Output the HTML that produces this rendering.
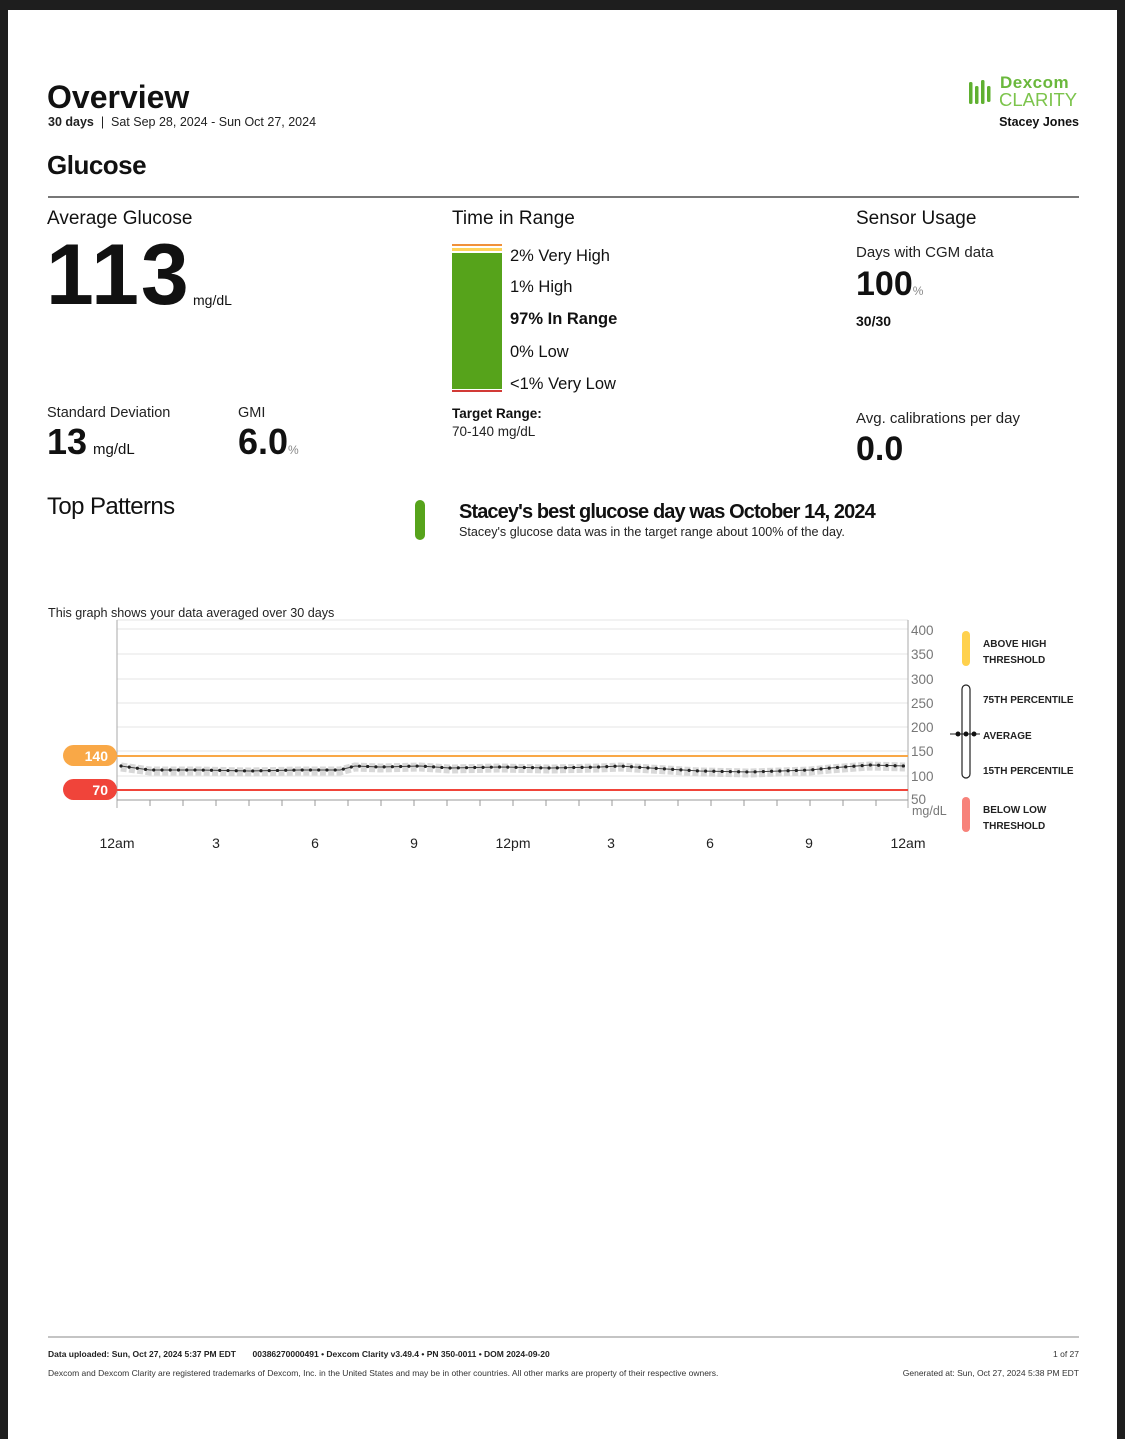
<!DOCTYPE html>
<html><head><meta charset="utf-8"><style>
*{margin:0;padding:0;box-sizing:border-box}
body{width:1125px;height:1439px;background:#1e1e1e;position:relative;overflow:hidden;font-family:"Liberation Sans",sans-serif;color:#111}
#pg{position:absolute;left:8px;top:10px;width:1109px;height:1429px;background:#fff}
.t{position:absolute;line-height:1;white-space:nowrap}
.b{font-weight:bold}
</style></head><body>
<div id="pg"></div>
<div class="t b" style="left:47px;top:81px;font-size:32px">Overview</div>
<div class="t" style="left:48px;top:116px;font-size:12.5px;color:#222"><b>30 days</b> &nbsp;| &nbsp;Sat Sep 28, 2024 - Sun Oct 27, 2024</div>
<div class="t b" style="left:47px;top:152px;font-size:26px;letter-spacing:-0.5px">Glucose</div>
<div style="position:absolute;left:48px;top:196px;width:1031px;height:1.5px;background:#777"></div>

<svg style="position:absolute;left:966px;top:78px" width="30" height="30"><g fill="#5fb030"><rect x="3" y="4" width="3.5" height="22" rx="1.5"/><rect x="9" y="8" width="3.5" height="18" rx="1.5"/><rect x="15" y="2" width="3.5" height="24" rx="1.5"/><rect x="21" y="8" width="3.5" height="16" rx="1.5"/></g></svg>
<div class="t b" style="left:1000px;top:74px;font-size:17px;color:#6ab83c;letter-spacing:0.5px">Dexcom</div>
<div class="t" style="left:999px;top:91px;font-size:18.5px;color:#7cc44c">CLARITY</div>
<div class="t b" style="right:46px;top:116px;font-size:12.5px">Stacey Jones</div>

<div class="t" style="left:47px;top:209px;font-size:19px">Average Glucose</div>
<div class="t b" style="left:46px;top:232px;font-size:86px;letter-spacing:2px">113</div>
<div class="t" style="left:193px;top:293px;font-size:14px">mg/dL</div>
<div class="t" style="left:47px;top:406px;font-size:14.5px;color:#222">Standard Deviation</div>
<div class="t b" style="left:47px;top:424px;font-size:36px">13</div>
<div class="t" style="left:93px;top:442px;font-size:15px">mg/dL</div>
<div class="t" style="left:238px;top:406px;font-size:14.5px;color:#222">GMI</div>
<div class="t b" style="left:238px;top:424px;font-size:36px">6.0<span style="font-size:12px;color:#888;font-weight:normal">%</span></div>

<div class="t" style="left:452px;top:209px;font-size:19px">Time in Range</div>
<div style="position:absolute;left:452px;top:244px;width:50px;height:2px;background:#f0913a"></div>
<div style="position:absolute;left:452px;top:248px;width:50px;height:3px;background:#ffd35a"></div>
<div style="position:absolute;left:452px;top:253px;width:50px;height:136px;background:#56a31b"></div>
<div style="position:absolute;left:452px;top:390px;width:50px;height:2px;background:#d23a36"></div>
<div class="t" style="left:510px;top:248px;font-size:16.5px">2% Very High</div>
<div class="t" style="left:510px;top:279px;font-size:16.5px">1% High</div>
<div class="t b" style="left:510px;top:311px;font-size:16.5px">97% In Range</div>
<div class="t" style="left:510px;top:344px;font-size:16.5px">0% Low</div>
<div class="t" style="left:510px;top:376px;font-size:16.5px">&lt;1% Very Low</div>
<div class="t b" style="left:452px;top:407px;font-size:13.5px">Target Range:</div>
<div class="t" style="left:452px;top:425px;font-size:13.5px;color:#222">70-140 mg/dL</div>

<div class="t" style="left:856px;top:209px;font-size:19px">Sensor Usage</div>
<div class="t" style="left:856px;top:245px;font-size:15px;color:#222">Days with CGM data</div>
<div class="t b" style="left:856px;top:267px;font-size:34px">100<span style="font-size:12px;color:#888;font-weight:normal">%</span></div>
<div class="t b" style="left:856px;top:314px;font-size:14px">30/30</div>
<div class="t" style="left:856px;top:411px;font-size:15px;color:#222">Avg. calibrations per day</div>
<div class="t b" style="left:856px;top:432px;font-size:34px">0.0</div>

<div class="t" style="left:47px;top:495px;font-size:24px;letter-spacing:-0.6px">Top Patterns</div>
<div style="position:absolute;left:415px;top:500px;width:10px;height:40px;border-radius:5px;background:#56a31b"></div>
<div class="t b" style="left:459px;top:502px;font-size:20px;letter-spacing:-0.9px">Stacey's best glucose day was October 14, 2024</div>
<div class="t" style="left:459px;top:526px;font-size:12.6px;color:#222">Stacey's glucose data was in the target range about 100% of the day.</div>

<div class="t" style="left:48px;top:607px;font-size:12.6px;color:#222">This graph shows your data averaged over 30 days</div>

<svg style="position:absolute;left:0;top:0" width="1125" height="900">
<g stroke="#e6e6e6" stroke-width="1">
<line x1="117" y1="629" x2="908" y2="629"/><line x1="117" y1="654" x2="908" y2="654"/><line x1="117" y1="679" x2="908" y2="679"/><line x1="117" y1="703" x2="908" y2="703"/><line x1="117" y1="727" x2="908" y2="727"/><line x1="117" y1="751" x2="908" y2="751"/><line x1="117" y1="776" x2="908" y2="776"/><line x1="117" y1="800" x2="908" y2="800"/>
<line x1="117" y1="620" x2="908" y2="620"/>
</g>
<line x1="117" y1="620" x2="117" y2="808" stroke="#aaa"/>
<line x1="908" y1="620" x2="908" y2="808" stroke="#aaa"/>
<line x1="117" y1="800" x2="908" y2="800" stroke="#999"/>
<g stroke="#999"><line x1="150" y1="800" x2="150" y2="806"/><line x1="183" y1="800" x2="183" y2="806"/><line x1="216" y1="800" x2="216" y2="806"/><line x1="249" y1="800" x2="249" y2="806"/><line x1="282" y1="800" x2="282" y2="806"/><line x1="315" y1="800" x2="315" y2="806"/><line x1="348" y1="800" x2="348" y2="806"/><line x1="381" y1="800" x2="381" y2="806"/><line x1="414" y1="800" x2="414" y2="806"/><line x1="447" y1="800" x2="447" y2="806"/><line x1="480" y1="800" x2="480" y2="806"/><line x1="513" y1="800" x2="513" y2="806"/><line x1="546" y1="800" x2="546" y2="806"/><line x1="579" y1="800" x2="579" y2="806"/><line x1="612" y1="800" x2="612" y2="806"/><line x1="645" y1="800" x2="645" y2="806"/><line x1="678" y1="800" x2="678" y2="806"/><line x1="711" y1="800" x2="711" y2="806"/><line x1="744" y1="800" x2="744" y2="806"/><line x1="777" y1="800" x2="777" y2="806"/><line x1="810" y1="800" x2="810" y2="806"/><line x1="843" y1="800" x2="843" y2="806"/><line x1="876" y1="800" x2="876" y2="806"/></g>
<line x1="117" y1="756" x2="908" y2="756" stroke="#f9a847" stroke-width="2"/>
<line x1="117" y1="790" x2="908" y2="790" stroke="#f0443a" stroke-width="2"/>
<path d="M121,767 L150,771 L200,771 L250,772 L300,771 L340,771 L355,767 L380,768 L420,767 L450,769 L500,768 L550,769 L600,768 L620,767 L650,769 L700,772 L750,773 L780,772 L810,771 L830,769 L870,766 L905,767" fill="none" stroke="#d8d8d8" stroke-width="9" stroke-dasharray="6 2.3" stroke-linecap="butt"/>
<path d="M121,766 L150,770 L200,770 L250,771 L300,770 L340,770 L355,766 L380,767 L420,766 L450,768 L500,767 L550,768 L600,767 L620,766 L650,768 L700,771 L750,772 L780,771 L810,770 L830,768 L870,765 L905,766" fill="none" stroke="#444" stroke-width="1"/>
<path d="M121,766 L150,770 L200,770 L250,771 L300,770 L340,770 L355,766 L380,767 L420,766 L450,768 L500,767 L550,768 L600,767 L620,766 L650,768 L700,771 L750,772 L780,771 L810,770 L830,768 L870,765 L905,766" fill="none" stroke="#222" stroke-width="3.2" stroke-dasharray="0 8.25" stroke-linecap="round"/>
<rect x="63" y="745" width="54" height="21" rx="10.5" fill="#f9a847"/>
<text x="108" y="761" font-size="14" font-weight="bold" fill="#fff" text-anchor="end" font-family="Liberation Sans">140</text>
<rect x="63" y="779" width="54" height="21" rx="10.5" fill="#f0443a"/>
<text x="108" y="795" font-size="14" font-weight="bold" fill="#fff" text-anchor="end" font-family="Liberation Sans">70</text>
<g font-family="Liberation Sans" font-size="13.5" fill="#777">
<text x="911" y="635">400</text><text x="911" y="659">350</text><text x="911" y="684">300</text><text x="911" y="708">250</text><text x="911" y="732">200</text><text x="911" y="756">150</text><text x="911" y="781">100</text><text x="911" y="804">50</text><text x="912" y="815" font-size="12.5">mg/dL</text>
</g>
<g font-family="Liberation Sans" font-size="14" fill="#222" text-anchor="middle">
<text x="117" y="848">12am</text><text x="216" y="848">3</text><text x="315" y="848">6</text><text x="414" y="848">9</text><text x="513" y="848">12pm</text><text x="611" y="848">3</text><text x="710" y="848">6</text><text x="809" y="848">9</text><text x="908" y="848">12am</text>
</g>
<rect x="962" y="631" width="8" height="35" rx="4" fill="#ffd14d"/>
<rect x="962" y="685" width="8" height="93" rx="4" fill="none" stroke="#222" stroke-width="1.2"/>
<line x1="950" y1="734" x2="980" y2="734" stroke="#222"/>
<circle cx="958" cy="734" r="2.5" fill="#111"/><circle cx="966" cy="734" r="2.5" fill="#111"/><circle cx="974" cy="734" r="2.5" fill="#111"/>
<rect x="962" y="797" width="8" height="35" rx="4" fill="#f7827a"/>
<g font-family="Liberation Sans" font-size="10" font-weight="bold" fill="#222">
<text x="983" y="647">ABOVE HIGH</text><text x="983" y="663">THRESHOLD</text>
<text x="983" y="703">75TH PERCENTILE</text>
<text x="983" y="739">AVERAGE</text>
<text x="983" y="774">15TH PERCENTILE</text>
<text x="983" y="813">BELOW LOW</text><text x="983" y="829">THRESHOLD</text>
</g>
</svg>

<div style="position:absolute;left:48px;top:1336px;width:1031px;height:1.5px;background:#c4c4c4"></div>
<div class="t b" style="left:48px;top:1350px;font-size:8.5px;color:#222">Data uploaded: Sun, Oct 27, 2024 5:37 PM EDT &nbsp;&nbsp;&nbsp;&nbsp;&nbsp; 00386270000491 • Dexcom Clarity v3.49.4 • PN 350-0011 • DOM 2024-09-20</div>
<div class="t" style="left:48px;top:1369px;font-size:8.5px;color:#333">Dexcom and Dexcom Clarity are registered trademarks of Dexcom, Inc. in the United States and may be in other countries. All other marks are property of their respective owners.</div>
<div class="t" style="right:46px;top:1350px;font-size:8.5px;color:#333">1 of 27</div>
<div class="t" style="right:46px;top:1369px;font-size:8.5px;color:#333">Generated at: Sun, Oct 27, 2024 5:38 PM EDT</div>
</body></html>
